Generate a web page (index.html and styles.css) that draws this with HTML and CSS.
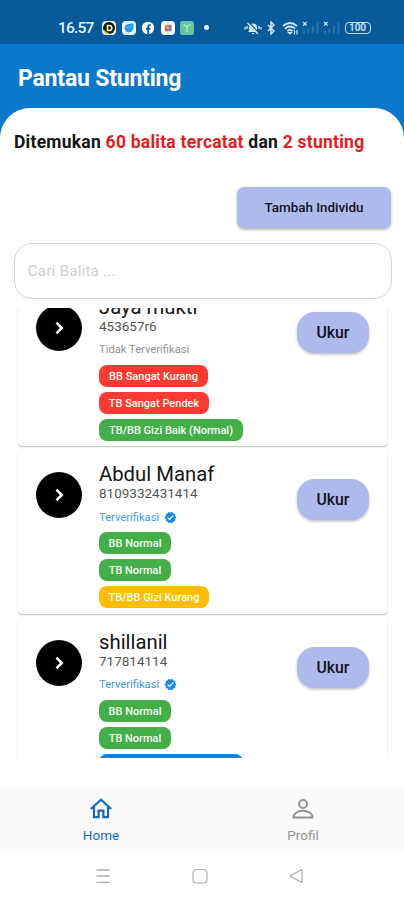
FILE: index.html
```html
<!DOCTYPE html>
<html lang="id">
<head>
<meta charset="utf-8">
<title>Pantau Stunting</title>
<link rel="stylesheet" href="styles.css">
</head>
<body>
<svg class="defs" aria-hidden="true">
  <symbol id="chevron" viewBox="0 0 24 24"><path d="M9.200 6.200l5.800 5.800-5.800 5.800" fill="none" stroke="#fff" stroke-width="2.800"/></symbol>
  <symbol id="verified" viewBox="0 0 24 24"><path fill="#1e88e5" d="M23 12l-2.440-2.780.340-3.680-3.610-.820-1.890-3.180L12 3 8.600 1.540 6.710 4.720l-3.610.810.340 3.680L1 12l2.440 2.780-.340 3.690 3.610.820 1.890 3.180L12 21l3.400 1.460 1.890-3.180 3.610-.820-.340-3.680L23 12z"/><path d="M6.500 12.200l3.500 3.400 7-7" fill="none" stroke="#fff" stroke-width="2.200"/></symbol>
  <symbol id="signal" viewBox="0 0 18 14"><path d="M1 1l3.600 3.600M4.600 1L1 4.600" stroke="#d5e6f3" stroke-width="1.300"/><path d="M2 12.500v-3M6.300 12.500V8M10.800 12.500V5M15.500 12.500V1.500" stroke="#2f74a9" stroke-width="2"/></symbol>
</svg>
<div class="status">
  <span class="time">16.57</span>
  <svg class="app" viewBox="0 0 14 14"><rect width="14" height="14" rx="4" fill="#eef3ee"/><circle cx="7" cy="7" r="6" fill="#161610"/><path d="M2 9.500a6 6 0 0 0 5 3.400" stroke="#e0cf35" stroke-width="1.500" fill="none"/><path d="M5.500 4.500h1.800a2.500 2.500 0 0 1 0 5H5.500z" fill="none" stroke="#f5e9b0" stroke-width="1.700"/></svg>
  <svg class="app" viewBox="0 0 14 14"><rect width="14" height="14" rx="4" fill="#eaf6ff"/><path d="M11.500 2.500C12 8 10.500 11.500 7 11.500A4.500 4.500 0 0 1 2.600 7C2.600 3.500 6 2.500 11.500 2.500z" fill="#2495f2"/><path d="M3.500 5.500c2 1.500 4 1 6-1" stroke="#63cbf5" fill="none"/></svg>
  <svg class="app" viewBox="0 0 14 14"><circle cx="7" cy="7" r="6.200" fill="#fff"/><path d="M9.800 4.100H8.700q-1.500 0-1.500 1.500v7.600M5 7.700h4.400" stroke="#075b9b" stroke-width="1.900" fill="none"/></svg>
  <svg class="app" viewBox="0 0 14 14"><rect width="14" height="14" rx="4" fill="#fff"/><circle cx="5.500" cy="5.400" r="2" fill="#f09545"/><circle cx="8.800" cy="5.500" r="2" fill="#b45bbd"/><circle cx="5.600" cy="8.600" r="2" fill="#e5486c"/><circle cx="8.700" cy="8.600" r="2" fill="#5787d8"/><circle cx="7" cy="7" r="1.300" fill="#efb83e"/></svg>
  <svg class="app" viewBox="0 0 14 14"><rect width="14" height="14" rx="2.500" fill="#67c6a0"/><path d="M3.500 3.500L7 5.500l3.500-2M7 5v6" stroke="#b5ecd4" stroke-width="1.300" fill="none"/></svg>
  <i class="dot"></i>
  <svg class="bell" viewBox="0 0 18 14"><path d="M5 10V6.500a4 4 0 0 1 8 0V10l1.200 1H3.800zM7.500 12h3L9 13.500z" fill="#d5e6f3"/><path d="M5.200 1.500l10 11" stroke="#075b9b" stroke-width="1.200"/><path d="M3.500 2l10.500 11M1 6v2.500M17 6v2.500M3 5v3M15 5v3" stroke="#d5e6f3" stroke-width="1.300"/></svg>
  <svg class="bt" viewBox="0 0 8 14"><path d="M1 4l6 6-3 3V1l3 3-6 6" fill="none" stroke="#d5e6f3" stroke-width="1.500"/></svg>
  <svg class="wifi" viewBox="0 0 17 14"><path d="M1 5Q8 -1 15 5M3 7.600Q8 3.300 13 7.600M5.300 10Q8 7.800 10.500 10" fill="none" stroke="#d5e6f3" stroke-width="1.900"/><path d="M6.500 11.500h3L8 13zM12.500 9v4.500M15 9v4.500" fill="#d5e6f3" stroke="#d5e6f3" stroke-width="1.200"/></svg>
  <svg class="signal"><use href="#signal"/></svg>
  <svg class="signal"><use href="#signal"/></svg>
  <span class="battery">100</span>
</div>
<header><h1>Pantau Stunting</h1></header>
<main>
  <p class="summary">Ditemukan <b>60 balita tercatat</b> dan <b>2 stunting</b></p>
  <button class="add">Tambah Individu</button>
  <input class="search" placeholder="Cari Balita ...">
  <div class="list">
    <article class="card">
      <span class="go"><svg><use href="#chevron"/></svg></span>
      <div class="info">
        <h2>Jaya mukti</h2><p class="nik">453657r6</p>
        <p class="state off">Tidak Terverifikasi</p>
        <span class="tag red w1">BB Sangat Kurang</span><span class="tag red w2">TB Sangat Pendek</span><span class="tag green w3">TB/BB Gizi Baik (Normal)</span>
      </div>
      <button class="measure">Ukur</button>
    </article>
    <article class="card">
      <span class="go"><svg><use href="#chevron"/></svg></span>
      <div class="info">
        <h2>Abdul Manaf</h2><p class="nik">8109332431414</p>
        <p class="state">Terverifikasi <svg><use href="#verified"/></svg></p>
        <span class="tag green w4">BB Normal</span><span class="tag green w4">TB Normal</span><span class="tag amber w5">TB/BB Gizi Kurang</span>
      </div>
      <button class="measure">Ukur</button>
    </article>
    <article class="card">
      <span class="go"><svg><use href="#chevron"/></svg></span>
      <div class="info">
        <h2>shillanil</h2><p class="nik">717814114</p>
        <p class="state">Terverifikasi <svg><use href="#verified"/></svg></p>
        <span class="tag green w4">BB Normal</span><span class="tag green w4">TB Normal</span><span class="tag blue w3"></span>
      </div>
      <button class="measure">Ukur</button>
    </article>
  </div>
</main>
<nav class="tabs">
  <a class="active"><svg viewBox="0 0 24 24"><path d="M1.800 12L12 2.800 22.200 12M5 10v10.200h4.600v-6.500h4.800v6.500H19V10" fill="none" stroke="currentColor" stroke-width="2.200"/></svg><span>Home</span></a>
  <a><svg viewBox="0 0 24 24"><circle cx="12" cy="7" r="4" fill="none" stroke="currentColor" stroke-width="1.900"/><path d="M2.500 20.500c0-9 19-9 19 0z" fill="none" stroke="currentColor" stroke-width="1.900" stroke-linejoin="round"/></svg><span>Profil</span></a>
</nav>
<footer class="system">
  <svg viewBox="0 0 16 16"><path d="M1.500 2h13M1.500 8h13M1.500 14.300h13" stroke="#aaa" stroke-width="1.300"/></svg>
  <svg viewBox="0 0 16 16"><rect x="1" y="1.500" width="14" height="13.500" rx="3.500" fill="none" stroke="#b0b0b0" stroke-width="1.200"/></svg>
  <svg viewBox="0 0 16 16"><path d="M14 1.500v13L2 8z" fill="none" stroke="#aaa" stroke-width="1.200" stroke-linejoin="round"/></svg>
</footer>
</body>
</html>
```
FILE: styles.css
```css
* { box-sizing: border-box; }
body { margin: 0; width: 404px; height: 900px; overflow: hidden; display: flex; flex-direction: column; background: #0a78cb; font-family: Roboto, sans-serif; color: #141414; }
h1, h2, p { margin: 0; }
button { border: 0; padding: 0; font-family: inherit; color: #11131c; background: #afbaec; box-shadow: 0 1.500px 3px #0004; }
.defs { position: absolute; width: 0; height: 0; }
.status { height: 44px; flex: none; display: flex; align-items: center; padding: 11px 0 0 58px; background: #075b9b; }
.time { width: 44px; font: 500 15.500px/18px Roboto, sans-serif; letter-spacing: -.8px; color: #e5f0f8; }
.app { width: 14px; height: 14px; margin-right: 5.500px; flex: none; }
.dot { width: 5px; height: 5px; margin: 0 35px 0 4px; border-radius: 50%; background: #e8f2fa; }
.bell { width: 18px; height: 14px; margin-right: 5px; }
.bt { width: 8px; height: 14px; margin-right: 7px; }
.wifi { width: 17px; height: 14px; margin-right: 3px; }
.signal { width: 18px; height: 14px; margin-right: 3.500px; }
.battery { width: 26px; height: 12px; border: 1.500px solid #c8dfed; border-radius: 4px; font: 700 10px/10px Roboto, sans-serif; text-align: center; color: #c8dfed; }
header { height: 64px; flex: none; padding: 20.500px 18px; }
h1 { font-size: 23px; line-height: 27px; font-weight: 700; letter-spacing: -.2px; color: #fff; }
main { height: 677px; flex: none; display: flex; flex-direction: column; background: #fff; border-radius: 30px 30px 0 0; padding-top: 22px; }
.summary { padding-left: 14px; font-size: 17.500px; line-height: 24px; font-weight: 700; letter-spacing: .24px; white-space: nowrap; }
.summary b { font-weight: 700; color: #e51c1c; }
.add { align-self: flex-end; width: 154px; height: 41px; margin: 33px 13px 0 0; border-radius: 7px; font-size: 13.400px; font-weight: 500; }
.search { width: 378px; height: 56px; margin: 15px 0 0 13.500px; padding: 0 13px; border: 1px solid #d5d5d5; border-radius: 18px; background: #fff; font: 400 15.500px Roboto, sans-serif; letter-spacing: .1px; outline: 0; }
.search::placeholder { color: #cfcfcf; opacity: 1; }
.list { height: 450px; margin-top: 9px; padding: 0 17px 0 18px; overflow: hidden; }
.card { display: flex; align-items: flex-start; height: 163.500px; margin-bottom: 4px; padding: 22px 18px 0; border-radius: 4px; box-shadow: 0 1.500px 1.500px -.5px #0004; }
.card:first-child { margin-top: -25.500px; }
.go { width: 46px; height: 46px; border-radius: 50%; background: #000; display: flex; align-items: center; justify-content: center; }
.go svg { width: 22px; height: 22px; }
.info { display: flex; flex-direction: column; align-items: flex-start; width: 198px; margin: -10px 0 0 17px; }
h2 { font-size: 20.300px; line-height: 24px; font-weight: 400; white-space: nowrap; }
.nik { font-size: 13.500px; line-height: 14px; color: #555; }
.state { display: flex; align-items: center; gap: 5px; height: 16px; margin: 9px 0 7px; font-size: 11.200px; color: #3f98e8; }
.state.off { color: #929292; }
.state svg { width: 13px; height: 13px; }
.tag { height: 22px; margin-bottom: 5px; border-radius: 8px; font-size: 11px; line-height: 23px; font-weight: 500; text-align: center; white-space: nowrap; color: #f4fff4; flex: none; }
.w1 { width: 109px; } .w2 { width: 110px; } .w3 { width: 144px; } .w4 { width: 72px; } .w5 { width: 110px; }
.red { background: #fb3b32; } .green { background: #44ae49; } .amber { background: #ffbd08; } .blue { background: #0c83df; }
.measure { width: 72px; height: 41px; margin-top: 7px; border-radius: 18px; font-size: 15.800px; font-weight: 500; }
.tabs { height: 67px; flex: none; display: flex; background: #fafafa; }
.tabs a { width: 50%; display: flex; flex-direction: column; align-items: center; padding-top: 12px; color: #929292; font-size: 13.500px; line-height: 16px; }
.tabs svg { width: 24px; height: 24px; margin-bottom: 6px; }
.tabs .active { color: #1769bd; }
.system { flex: 1; display: flex; gap: 80.500px; padding: 16px 0 0 95px; background: #fff; }
.system svg { width: 16px; height: 16px; }
```
